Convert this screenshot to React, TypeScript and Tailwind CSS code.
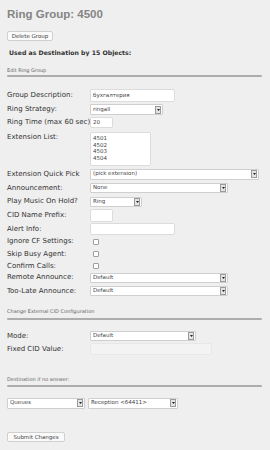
const Arrow = () => (
  <span className="w-[6px] h-[8px] bg-[#e4e4e4] border border-[#9a9a9a] flex items-center justify-center shrink-0">
    <svg width="3" height="2" viewBox="0 0 3 2">
      <path d="M0 0h3L1.5 2z" fill="#222" />
    </svg>
  </span>
);

const Select = ({ w, h, text }: { w: string; h: string; text: string }) => (
  <div
    className={`${w} ${h} flex items-center bg-white border border-[#cfcfcf] rounded-[1px] pl-[2px] pr-[1px] text-[5.5px] text-[#444]`}
  >
    <span className="flex-1 truncate leading-none">{text}</span>
    <Arrow />
  </div>
);

const Input = ({ w, h, text }: { w: string; h: string; text?: string }) => (
  <div
    className={`${w} ${h} flex items-center bg-white border border-[#dcdcdc] rounded-[2px] px-[2px] text-[5.5px] text-[#444] leading-none`}
  >
    {text}
  </div>
);

const Check = () => (
  <span className="ml-[3px] w-[6px] h-[6px] bg-white border border-[#a0a0a0] rounded-[1px]" />
);

const Row = ({
  h,
  label,
  children,
  top,
}: {
  h: string;
  label: string;
  children: React.ReactNode;
  top?: boolean;
}) => (
  <div className={`flex ${h} ${top ? "items-start" : "items-center"}`}>
    <div
      className={`w-[83px] shrink-0 whitespace-nowrap text-[7px] text-[#333] leading-none ${top ? "pt-[3px]" : ""}`}
    >
      {label}
    </div>
    {children}
  </div>
);

const Section = ({ title, mt }: { title: string; mt: string }) => (
  <div className={`${mt} h-[6px] text-[5px] leading-[6px] text-[#666]`}>{title}</div>
);

export default function App() {
  return (
    <div className="w-[270px] h-[450px] bg-[#efefef] px-[7px] pr-[8px] pt-[6px] font-['DejaVu_Sans',sans-serif] overflow-hidden">
      <div className="h-[16px] leading-[16px] text-[11.5px] font-bold text-[#858585] font-['Liberation_Sans',sans-serif]">
        Ring Group: 4500
      </div>
      <div className="mt-[9px] w-[46px] h-[10px] bg-[#fafafa] border border-[#d0d0d0] rounded-[2px] flex items-center justify-center text-[5.5px] text-[#444]">
        Delete Group
      </div>
      <div className="mt-[7px] h-[10px] leading-[10px] pl-[2px] text-[6.2px] font-bold text-[#333] whitespace-nowrap">
        Used as Destination by 15 Objects:
      </div>

      <Section title="Edit Ring Group" mt="mt-[9px]" />
      <div className="mt-[2px] h-[2px] bg-[#adadad] rounded-full" />

      <div className="mt-[11px] flex flex-col">
        <Row h="h-[15px]" label="Group Description:">
          <Input w="w-[85px]" h="h-[13px]" text="бухгалтерия" />
        </Row>
        <Row h="h-[13px]" label="Ring Strategy:">
          <Select w="w-[73px]" h="h-[11px]" text="ringall" />
        </Row>
        <Row h="h-[13px]" label="Ring Time (max 60 sec)">
          <Input w="w-[23px]" h="h-[11px]" text="20" />
        </Row>
        <Row h="h-[36px] mt-[2px]" label="Extension List:" top>
          <div className="mt-[1px] w-[61px] h-[34px] bg-white border border-[#dcdcdc] rounded-[2px] px-[2px] pt-[2px] text-[5.5px] leading-[6.7px] text-[#444]">
            <div>4501</div>
            <div>4502</div>
            <div>4503</div>
            <div>4504</div>
          </div>
        </Row>
        <Row h="h-[14px]" label="Extension Quick Pick">
          <Select w="w-[169px]" h="h-[11px]" text="(pick extension)" />
        </Row>
        <Row h="h-[14px]" label="Announcement:">
          <Select w="w-[138px]" h="h-[10px]" text="None" />
        </Row>
        <Row h="h-[13px]" label="Play Music On Hold?">
          <Select w="w-[52px]" h="h-[10px]" text="Ring" />
        </Row>
        <Row h="h-[14px]" label="CID Name Prefix:">
          <Input w="w-[23px]" h="h-[13px]" />
        </Row>
        <Row h="h-[14px]" label="Alert Info:">
          <Input w="w-[85px]" h="h-[12px]" />
        </Row>
        <Row h="h-[11px]" label="Ignore CF Settings:">
          <Check />
        </Row>
        <Row h="h-[14px]" label="Skip Busy Agent:">
          <Check />
        </Row>
        <Row h="h-[10px]" label="Confirm Calls:">
          <Check />
        </Row>
        <Row h="h-[13px]" label="Remote Announce:">
          <Select w="w-[138px]" h="h-[10px]" text="Default" />
        </Row>
        <Row h="h-[14px]" label="Too-Late Announce:">
          <Select w="w-[138px]" h="h-[10px]" text="Default" />
        </Row>
      </div>

      <Section title="Change External CID Configuration" mt="mt-[10px]" />
      <div className="mt-[4px] h-[2px] bg-[#adadad] rounded-full" />

      <div className="mt-[10px] flex flex-col">
        <Row h="h-[12px]" label="Mode:">
          <Select w="w-[106px]" h="h-[10px]" text="Default" />
        </Row>
        <Row h="h-[14px]" label="Fixed CID Value:">
          <div className="w-[122px] h-[12px] bg-[#f3f3f3] border border-[#e8e8e8] rounded-[2px]" />
        </Row>
      </div>

      <Section title="Destination if no answer:" mt="mt-[20px]" />
      <div className="mt-[3px] h-[2px] bg-[#adadad] rounded-full" />

      <div className="mt-[10px] h-[12px] flex items-center gap-[3px]">
        <Select w="w-[78px]" h="h-[11px]" text="Queues" />
        <Select w="w-[90px]" h="h-[11px]" text="Reception <64411>" />
      </div>

      <div className="mt-[23px] w-[58px] h-[10px] bg-[#fafafa] border border-[#d0d0d0] rounded-[2px] flex items-center justify-center text-[5.5px] text-[#444]">
        Submit Changes
      </div>
    </div>
  );
}
